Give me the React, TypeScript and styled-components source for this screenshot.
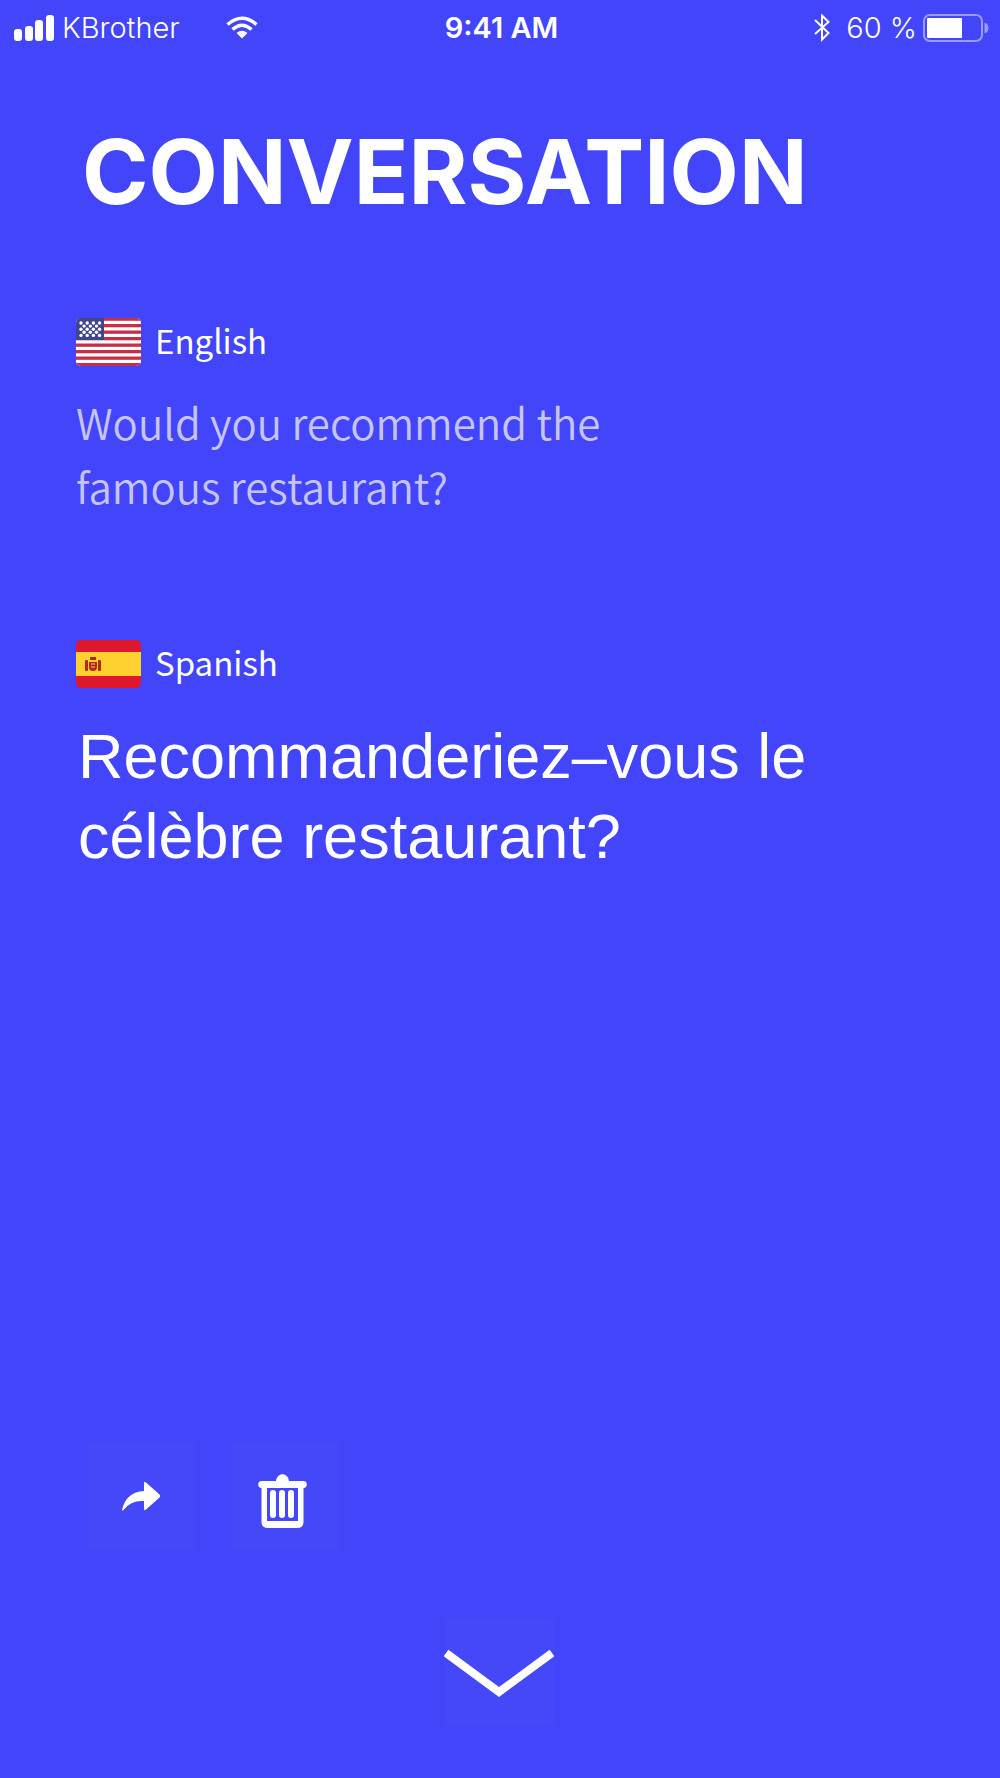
import React from "react";
import styled, { createGlobalStyle } from "styled-components";

const GlobalStyle = createGlobalStyle`
  * { box-sizing: border-box; }
  body { margin: 0; background: #4245f9; }
`;

const humanist = `"Noto Sans CJK KR", "Open Sans", sans-serif`;

const Screen = styled.div`
  display: flex;
  flex-direction: column;
  min-height: 100vh;
  background: #4245f9;
  color: #fff;
  font-family: Inter, "Liberation Sans", sans-serif;
`;

const StatusBar = styled.header`
  display: grid;
  grid-template-columns: 1fr auto 1fr;
  align-items: center;
  height: 56px;
  padding: 0 11px 0 14px;
  font-size: 29px;
  line-height: 32px;
`;

const StatusGroup = styled.div<{ $end?: boolean }>`
  display: flex;
  align-items: center;
  justify-content: ${(p) => (p.$end ? "flex-end" : "flex-start")};
  gap: 8px;
`;

const Carrier = styled.span`
  font-weight: 300;
  margin-right: 38px;
`;

const Percent = styled.span`
  font-weight: 300;
  margin: 0 -2px 0 8px;
`;

const Clock = styled.time`
  font-weight: 600;
`;

const Main = styled.main`
  display: flex;
  flex-direction: column;
  flex: 1;
  padding: 64px 76px 52px;
`;

const Title = styled.h1`
  margin: 0 0 90px;
  padding-left: 6px;
  font-size: 90px;
  line-height: 104px;
  font-weight: 700;
`;

const Passage = styled.section`
  margin-bottom: 118px;
`;

const Language = styled.h2`
  display: flex;
  align-items: center;
  gap: 14px;
  margin: 0 0 20px;
  height: 56px;
  font-family: ${humanist};
  font-size: 33px;
  line-height: 48px;
  font-weight: 400;
`;

const LanguageName = styled.span`
  padding-bottom: 4px;
`;

const Source = styled.p`
  margin: 0;
  max-width: 640px;
  font-family: ${humanist};
  font-size: 42px;
  line-height: 64px;
  font-weight: 350;
  color: #c6c4fd;
`;

const Translation = styled.p`
  margin: 0;
  padding: 4px 0 0 2px;
  max-width: 800px;
  font-family: "Liberation Sans", Arial, sans-serif;
  font-size: 63px;
  line-height: 80px;
  font-weight: 400;
`;

const Actions = styled.div`
  display: flex;
  gap: 36px;
  margin-top: auto;
  padding-left: 12px;
`;

const IconButton = styled.button`
  display: flex;
  align-items: center;
  justify-content: center;
  width: 108px;
  height: 108px;
  padding: 0;
  border: 0;
  color: inherit;
  background: rgba(255, 255, 255, 0.02);
  cursor: pointer;

  svg {
    flex-shrink: 0;
  }
`;

const Footer = styled.footer`
  display: flex;
  justify-content: center;
  margin-top: 68px;
`;

const Signal = () => (
  <svg width="40" height="26" viewBox="0 0 40 26" fill="currentColor" aria-hidden="true">
    <rect x="0" y="14" width="8" height="12" rx="3" />
    <rect x="11" y="11" width="8" height="15" rx="3" />
    <rect x="21" y="5" width="8" height="21" rx="3" />
    <rect x="32" y="0" width="8" height="26" rx="3" />
  </svg>
);

const Wifi = () => (
  <svg width="32" height="24" viewBox="0 0 32 24" fill="none" stroke="currentColor" strokeWidth="3.500" aria-hidden="true">
    <path d="M1.500 8.500Q16 -4 30.500 8.500" />
    <path d="M6.500 13.500Q16 5 25.500 13.500" />
    <path d="M10.500 17Q16 12.500 21.500 17L16 22.500Z" fill="currentColor" stroke="none" />
  </svg>
);

const Bluetooth = () => (
  <svg width="16" height="28" viewBox="0 0 16 28" fill="none" stroke="currentColor" strokeWidth="2" aria-hidden="true">
    <path d="M1 6L14.500 19L8 25.500V1.500L14.500 8L1 20" />
  </svg>
);

const Battery = () => (
  <svg width="66" height="28" viewBox="0 0 66 28" aria-hidden="true">
    <rect x="1" y="1" width="58" height="26" rx="6" fill="none" stroke="#9a9bfc" strokeWidth="2" />
    <rect x="4" y="4" width="35" height="20" rx="1" fill="#fff" />
    <path d="M62 9Q65 10 65 14T62 19Z" fill="#9a9bfc" stroke="#9a9bfc" />
  </svg>
);

const FlagUS = () => (
  <svg width="65" height="48" viewBox="0 0 65 48" role="img" aria-label="United States flag">
    <clipPath id="us">
      <rect width="65" height="48" rx="5" />
    </clipPath>
    <g clipPath="url(#us)">
      <rect width="65" height="48" fill="#fff" />
      {[0, 1, 2, 3, 4, 5, 6, 7].map((i) => (
        <rect key={i} y={i * 6.5 - 0.5} width="65" height="3.3" fill="#c72f48" />
      ))}
      <rect width="28" height="22" fill="#41468a" />
      {[0, 1, 2, 3, 4].map((r) =>
        [0, 1, 2, 3].slice(0, r % 2 ? 3 : 4).map((c) => (
          <circle key={`${r}-${c}`} cx={5 + c * 6.2 + (r % 2) * 3.1} cy={5 + r * 3.1} r="1.700" fill="#fff" />
        ))
      )}
    </g>
  </svg>
);

const FlagES = () => (
  <svg width="65" height="48" viewBox="0 0 65 48" role="img" aria-label="Spanish flag">
    <clipPath id="es">
      <rect width="65" height="48" rx="5" />
    </clipPath>
    <g clipPath="url(#es)">
      <rect width="65" height="48" fill="#de172c" />
      <rect y="12" width="65" height="24" fill="#fed130" />
      <g fill="#b3291d">
        <rect x="9" y="20" width="3" height="11" rx="1" />
        <rect x="22" y="20" width="3" height="11" rx="1" />
        <path d="M14 17h6v3h-6zM13 22h8v5q0 4-4 4t-4-4z" />
        <path d="M15 24h4M15 27h4" stroke="#fed130" />
      </g>
    </g>
  </svg>
);

const ShareIcon = () => (
  <svg width="108" height="108" viewBox="0 0 108 108" fill="currentColor" aria-hidden="true">
    <path d="M34 68Q38 50 56 49V41Q56 39 58 40.500L71 52Q73 54 71 56L58 67.500Q56 69 56 67V59Q43 58 35.500 68Q34 69 34 68Z" />
  </svg>
);

const TrashIcon = () => (
  <svg width="108" height="108" viewBox="0 0 108 108" fill="currentColor" aria-hidden="true">
    <path d="M44 39C45 30 56 30 57 39H71A3.500 3.500 0 0 1 71.500 46V80Q71.500 86 65 86H36Q29.500 86 29.500 80V46A3.500 3.500 0 0 1 30 39Z" />
    <rect x="35" y="46" width="31" height="33" fill="#4548f8" />
    {[38, 47, 56].map((x) => (
      <rect key={x} x={x} y="48" width="6" height="28" rx="3" />
    ))}
  </svg>
);

const ChevronIcon = () => (
  <svg width="112" height="50" viewBox="0 0 112 50" fill="none" stroke="currentColor" strokeWidth="8" aria-hidden="true">
    <path d="M2 6L55 45L108 6" />
  </svg>
);

export default function App() {
  return (
    <>
      <GlobalStyle />
      <Screen>
        <StatusBar>
          <StatusGroup>
            <Signal />
            <Carrier>KBrother</Carrier>
            <Wifi />
          </StatusGroup>
          <Clock>9:41 AM</Clock>
          <StatusGroup $end>
            <Bluetooth />
            <Percent>60 %</Percent>
            <Battery />
          </StatusGroup>
        </StatusBar>
        <Main>
          <Title>CONVERSATION</Title>
          <Passage>
            <Language>
              <FlagUS />
              <LanguageName>English</LanguageName>
            </Language>
            <Source lang="en">Would you recommend the famous restaurant?</Source>
          </Passage>
          <Passage>
            <Language>
              <FlagES />
              <LanguageName>Spanish</LanguageName>
            </Language>
            <Translation>Recommanderiez–vous le célèbre restaurant?</Translation>
          </Passage>
          <Actions>
            <IconButton type="button" aria-label="Share">
              <ShareIcon />
            </IconButton>
            <IconButton type="button" aria-label="Delete">
              <TrashIcon />
            </IconButton>
          </Actions>
          <Footer>
            <IconButton type="button" aria-label="Close conversation">
              <ChevronIcon />
            </IconButton>
          </Footer>
        </Main>
      </Screen>
    </>
  );
}
